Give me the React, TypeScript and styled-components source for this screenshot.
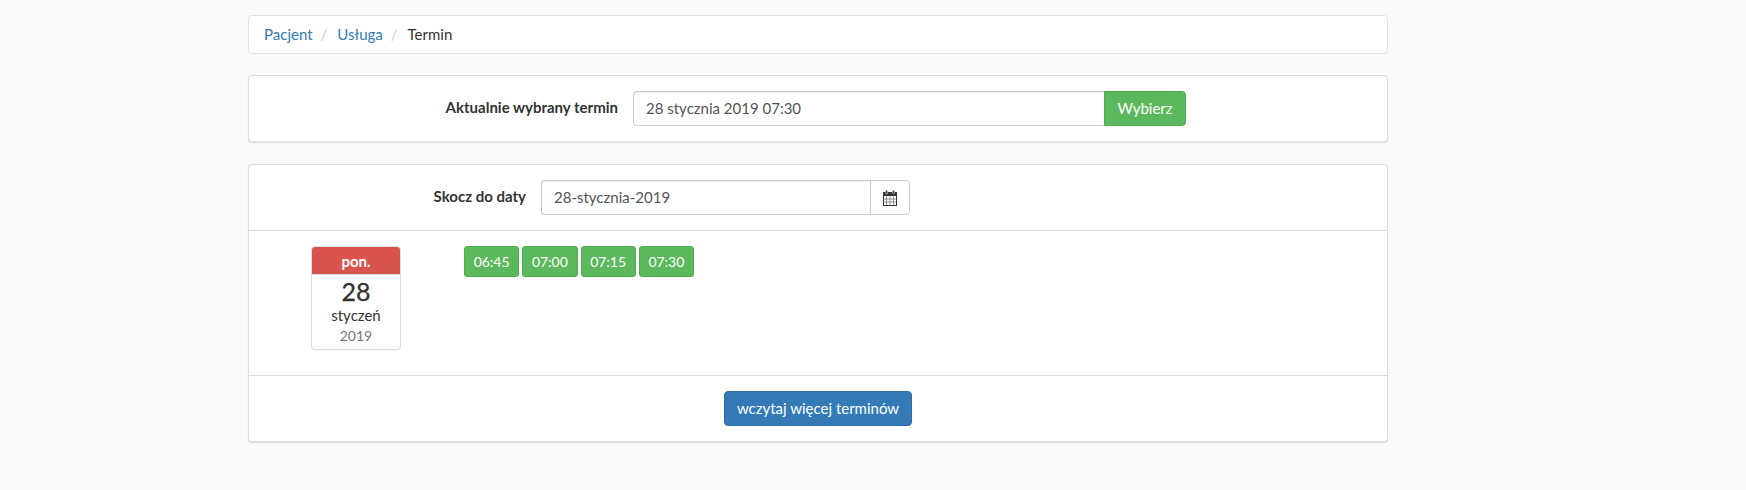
import React from "react";
import styled, { createGlobalStyle } from "styled-components";

const Global = createGlobalStyle`
  html, body { margin: 0; padding: 0; background: #fafafa; }
  body { font-family: Lato, "Noto Sans", sans-serif; font-size: 15px; line-height: 21px; color: #333; }
  * { box-sizing: border-box; }
`;

const Page = styled.div`
  width: 1140px;
  margin-left: 248px;
  padding-top: 15px;
  display: flex;
  flex-direction: column;
  min-height: 490px;
`;

const Breadcrumb = styled.nav`
  display: flex;
  align-items: center;
  height: 39px;
  padding: 0 15px;
  background: #fff;
  border: 1px solid #e3e3e3;
  border-radius: 4px;
  margin-bottom: 21px;
`;
const Crumb = styled.a`
  color: #337ab7;
  text-decoration: none;
`;
const Sep = styled.span`
  color: #ccc;
  padding: 0 10px 0 8px;
`;
const Current = styled.span`
  color: #333;
`;

const Panel = styled.section<{ $mb?: number }>`
  background: #fff;
  border: 1px solid #ddd;
  border-radius: 4px;
  box-shadow: 0 1px 1px rgba(0, 0, 0, 0.12);
  margin-bottom: ${(p) => p.$mb ?? 0}px;
`;

const Row = styled.div<{ $h: number; $border?: boolean }>`
  height: ${(p) => p.$h}px;
  display: flex;
  align-items: flex-start;
  border-bottom: ${(p) => (p.$border ? "1px solid #ddd" : "none")};
`;

const FormRow = styled(Row)`
  padding-top: 15px;
`;

const Label = styled.label<{ $w: number }>`
  width: ${(p) => p.$w}px;
  font-weight: 700;
  text-align: right;
  padding-top: 6px;
  color: #333;
  flex: none;
`;

const Group = styled.div`
  display: flex;
  margin-left: 15px;
`;

const Field = styled.div<{ $w: number }>`
  width: ${(p) => p.$w}px;
  height: 35px;
  padding: 6px 12px;
  background: #fff;
  color: #555;
  border: 1px solid #ccc;
  border-right: none;
  border-radius: 4px 0 0 4px;
  box-shadow: inset 0 1px 1px rgba(0, 0, 0, 0.075);
`;

const Choose = styled.button`
  width: 82px;
  height: 35px;
  padding: 0;
  font: inherit;
  color: #fff;
  background: #5cb85c;
  border: 1px solid #4cae4c;
  border-radius: 0 4px 4px 0;
`;

const Addon = styled.div`
  width: 40px;
  height: 35px;
  display: flex;
  align-items: center;
  justify-content: center;
  background: #fff;
  border: 1px solid #ccc;
  border-radius: 0 4px 4px 0;
`;

const SlotsRow = styled(Row)`
  padding: 15px 0 0 62px;
`;

const DateCard = styled.div`
  width: 90px;
  height: 104px;
  flex: none;
  background: #fff;
  border: 1px solid #ddd;
  border-radius: 4px;
  box-shadow: 0 1px 1px rgba(0, 0, 0, 0.05);
  text-align: center;
  overflow: hidden;
`;
const Weekday = styled.div`
  height: 28px;
  background: #d9534f;
  color: #fff;
  font-weight: 700;
  line-height: 28px;
  border-bottom: 1px solid #ddd;
`;
const Day = styled.div`
  font-size: 25px;
  line-height: 30px;
  margin-top: 1px;
  -webkit-text-stroke: 0.3px #333;
  color: #333;
`;
const Month = styled.div`
  line-height: 18px;
`;
const Year = styled.div`
  font-size: 14px;
  line-height: 18px;
  margin-top: 3px;
  color: #777;
`;

const Times = styled.div`
  display: flex;
  gap: 3px;
  margin-left: 63px;
`;
const Time = styled.button`
  height: 31px;
  width: 55.25px;
  padding: 0;
  font: inherit;
  font-size: 14px;
  color: #fff;
  background: #5cb85c;
  border: 1px solid #4cae4c;
  border-radius: 3px;
`;

const MoreRow = styled(Row)`
  justify-content: center;
  padding-top: 15px;
`;
const More = styled.button`
  width: 188px;
  height: 35px;
  padding: 0;
  font: inherit;
  color: #fff;
  background: #337ab7;
  border: 1px solid #2e6da4;
  border-radius: 4px;
`;

const CalendarIcon = () => (
  <svg width="14" height="16" viewBox="0 0 14 16" aria-hidden="true">
    <rect x="0.5" y="2.5" width="13" height="13" fill="#fff" stroke="#333" />
    <rect x="0" y="2" width="14" height="4" fill="#333" />
    <rect x="2.6" y="0.3" width="2" height="3.6" rx="0.9" fill="#333" stroke="#fff" strokeWidth="0.5" />
    <rect x="9.4" y="0.3" width="2" height="3.6" rx="0.9" fill="#333" stroke="#fff" strokeWidth="0.5" />
    <path d="M3.5 6V15M7 6V15M10.5 6V15M0.5 9H13.5M0.5 12H13.5" stroke="#555" strokeWidth="0.6" fill="none" />
  </svg>
);

const times = ["06:45", "07:00", "07:15", "07:30"];

export default function App() {
  return (
    <>
      <Global />
      <Page>
        <Breadcrumb>
          <Crumb>Pacjent</Crumb>
          <Sep>/</Sep>
          <Crumb>Usługa</Crumb>
          <Sep>/</Sep>
          <Current>Termin</Current>
        </Breadcrumb>

        <Panel $mb={22}>
          <FormRow $h={65}>
            <Label $w={369}>Aktualnie wybrany termin</Label>
            <Group>
              <Field $w={471}>28 stycznia 2019 07:30</Field>
              <Choose>Wybierz</Choose>
            </Group>
          </FormRow>
        </Panel>

        <Panel>
          <FormRow $h={66} $border>
            <Label $w={277}>Skocz do daty</Label>
            <Group>
              <Field $w={329}>28-stycznia-2019</Field>
              <Addon>
                <CalendarIcon />
              </Addon>
            </Group>
          </FormRow>
          <SlotsRow $h={145} $border>
            <DateCard>
              <Weekday>pon.</Weekday>
              <Day>28</Day>
              <Month>styczeń</Month>
              <Year>2019</Year>
            </DateCard>
            <Times>
              {times.map((t) => (
                <Time key={t}>{t}</Time>
              ))}
            </Times>
          </SlotsRow>
          <MoreRow $h={65}>
            <More>wczytaj więcej terminów</More>
          </MoreRow>
        </Panel>
      </Page>
    </>
  );
}
